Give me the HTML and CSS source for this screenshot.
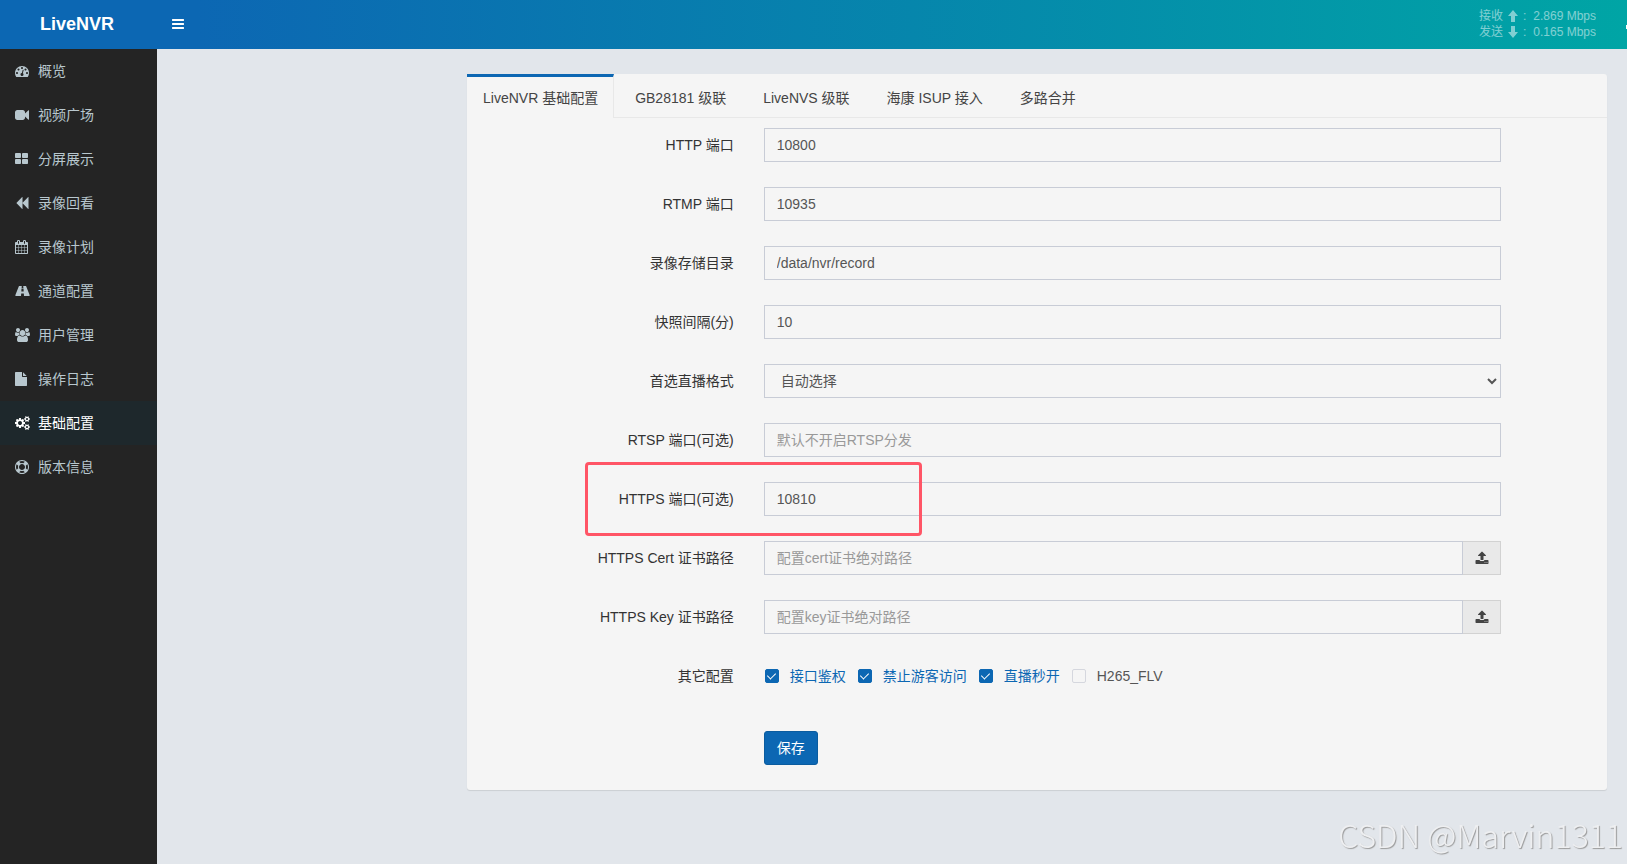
FILE: index.html
```html
<!DOCTYPE html>
<html lang="zh-CN">
<head>
<meta charset="utf-8">
<meta name="viewport" content="width=device-width, initial-scale=1">
<title>LiveNVR</title>
<link rel="stylesheet" href="styles.css">
</head>
<body>
<svg class="sprite" aria-hidden="true">
  <symbol id="i-upload" viewBox="0 0 1792 1792"><path d="M1344 1472q0-26-19-45t-45-19-45 19-19 45 19 45 45 19 45-19 19-45zm256 0q0-26-19-45t-45-19-45 19-19 45 19 45 45 19 45-19 19-45zm128-224v320q0 40-28 68t-68 28h-1472q-40 0-68-28t-28-68v-320q0-40 28-68t68-28h427q21 56 70.500 92t110.500 36h256q61 0 110.500-36t70.500-92h427q40 0 68 28t28 68zm-325-648q-17 40-59 40h-256v448q0 26-19 45t-45 19h-256q-26 0-45-19t-19-45v-448h-256q-42 0-59-40-17-39 14-69l448-448q18-19 45-19t45 19l448 448q31 30 14 69z"/></symbol>
</svg>

<header class="header">
  <a class="logo" href="#">LiveNVR</a>
  <button class="menu-toggle" type="button" aria-label="菜单">
    <svg class="icon" viewBox="0 0 1792 1792"><path d="M1536 1344v128q0 26-19 45t-45 19h-1408q-26 0-45-19t-19-45v-128q0-26 19-45t45-19h1408q26 0 45 19t19 45zm0-512v128q0 26-19 45t-45 19h-1408q-26 0-45-19t-19-45v-128q0-26 19-45t45-19h1408q26 0 45 19t19 45zm0-512v128q0 26-19 45t-45 19h-1408q-26 0-45-19t-19-45v-128q0-26 19-45t45-19h1408q26 0 45 19t19 45z"/></svg>
  </button>
  <div class="traffic">
    <span class="traffic-name">接收</span>
    <svg class="arrow" viewBox="0 0 10 12"><path d="M5 0l5 6H7v6H3V6H0z"/></svg>
    <span class="traffic-colon">:</span>
    <span>2.869 Mbps</span>
    <span class="traffic-name">发送</span>
    <svg class="arrow" viewBox="0 0 10 12"><path d="M5 12l5-6H7V0H3v6H0z"/></svg>
    <span class="traffic-colon">:</span>
    <span>0.165 Mbps</span>
  </div>
  <span class="header-edge"></span>
</header>

<div class="layout">
  <nav class="sidebar">
    <a class="nav-item" href="#"><svg class="icon" viewBox="0 0 1792 1792"><path d="M384 1152q0-53-37.500-90.500t-90.500-37.500-90.500 37.500-37.500 90.500 37.500 90.500 90.500 37.500 90.500-37.500 37.500-90.500zm192-448q0-53-37.500-90.500t-90.500-37.500-90.500 37.500-37.500 90.500 37.500 90.500 90.500 37.500 90.500-37.500 37.500-90.500zm428 481l101-382q6-26-7.500-48.500t-38.500-29.500-48 6.500-30 39.500l-101 382q-60 5-107 43.500t-63 98.500q-20 77 20 146t117 89 146-20 89-117q16-60-6-117t-72-91zm660-33q0-53-37.500-90.500t-90.500-37.500-90.500 37.500-37.500 90.500 37.500 90.500 90.500 37.500 90.500-37.500 37.500-90.500zm-640-640q0-53-37.500-90.500t-90.500-37.500-90.500 37.500-37.500 90.500 37.500 90.500 90.500 37.500 90.500-37.500 37.500-90.500zm448 192q0-53-37.500-90.500t-90.500-37.500-90.500 37.500-37.500 90.500 37.500 90.500 90.500 37.500 90.500-37.500 37.500-90.500zm320 448q0 261-141 483-19 29-54 29h-1402q-35 0-54-29-141-221-141-483 0-182 71-348t191-286 286-191 348-71 348 71 286 191 191 286 71 348z"/></svg>概览</a>
    <a class="nav-item" href="#"><svg class="icon" viewBox="0 0 1792 1792"><path d="M1792 352v1088q0 42-39 59-13 5-25 5-27 0-45-19l-403-403v166q0 119-84.500 203.500t-203.500 84.500h-704q-119 0-203.500-84.500t-84.500-203.500v-704q0-119 84.500-203.500t203.500-84.500h704q119 0 203.500 84.500t84.500 203.500v165l403-402q18-19 45-19 12 0 25 5 39 17 39 59z"/></svg>视频广场</a>
    <a class="nav-item" href="#"><svg class="icon" viewBox="64 0 1792 1792"><path d="M832 1024v384q0 52-38 90t-90 38h-512q-52 0-90-38t-38-90v-384q0-52 38-90t90-38h512q52 0 90 38t38 90zm0-768v384q0 52-38 90t-90 38h-512q-52 0-90-38t-38-90v-384q0-52 38-90t90-38h512q52 0 90 38t38 90zm896 768v384q0 52-38 90t-90 38h-512q-52 0-90-38t-38-90v-384q0-52 38-90t90-38h512q52 0 90 38t38 90zm0-768v384q0 52-38 90t-90 38h-512q-52 0-90-38t-38-90v-384q0-52 38-90t90-38h512q52 0 90 38t38 90z"/></svg>分屏展示</a>
    <a class="nav-item" href="#"><svg class="icon" viewBox="64 0 1792 1792"><path d="M1747 141q19-19 32-13t13 32v1472q0 26-13 32t-32-13l-710-710q-9-9-13-19v710q0 26-13 32t-32-13l-710-710q-19-19-19-45t19-45l710-710q19-19 32-13t13 32v710q4-10 13-19z"/></svg>录像回看</a>
    <a class="nav-item" href="#"><svg class="icon" viewBox="64 0 1792 1792"><path d="M192 1664h288v-288h-288v288zm352 0h320v-288h-320v288zm-352-352h288v-320h-288v320zm352 0h320v-320h-320v320zm-352-384h288v-288h-288v288zm736 736h320v-288h-320v288zm-384-736h320v-288h-320v288zm768 736h288v-288h-288v288zm-384-352h320v-320h-320v320zm-352-864v-288q0-13-9.500-22.500t-22.500-9.500h-64q-13 0-22.500 9.500t-9.500 22.500v288q0 13 9.500 22.500t22.500 9.500h64q13 0 22.500-9.500t9.500-22.500zm736 864h288v-320h-288v320zm-384-384h320v-288h-320v288zm384 0h288v-288h-288v288zm32-480v-288q0-13-9.500-22.500t-22.500-9.500h-64q-13 0-22.500 9.500t-9.500 22.500v288q0 13 9.500 22.500t22.500 9.500h64q13 0 22.500-9.500t9.500-22.500zm384-64v1280q0 52-38 90t-90 38h-1408q-52 0-90-38t-38-90v-1280q0-52 38-90t90-38h128v-96q0-66 47-113t113-47h64q66 0 113 47t47 113v96h384v-96q0-66 47-113t113-47h64q66 0 113 47t47 113v96h128q52 0 90 38t38 90z"/></svg>录像计划</a>
    <a class="nav-item" href="#"><svg class="icon icon-wide" viewBox="0 0 1920 1792"><path d="M1111 932v-4l-24-320q-1-13-11-22.500t-23-9.500h-186q-13 0-23 9.500t-11 22.500l-24 320v4q-1 12 8 20t21 8h244q12 0 21-8t8-20zM1870 1463q0 73-46 73h-704q13 0 22-9.500t8-22.500l-20-256q-1-13-11-22.500t-23-9.500h-272q-13 0-23 9.500t-11 22.500l-20 256q-1 13 8 22.500t22 9.500h-704q-46 0-46-73 0-54 26-116l417-1044q8-19 26-33t38-14h339q-13 0-23 9.500t-11 22.500l-15 192q-1 14 8 23t22 9h166q13 0 22-9t8-23l-15-192q-1-13-11-22.500t-23-9.500h339q20 0 38 14t26 33l417 1044q26 62 26 116z"/></svg>通道配置</a>
    <a class="nav-item" href="#"><svg class="icon icon-wide" viewBox="0 0 1920 1792"><path d="M593 896q-162 5-265 128h-134q-82 0-138-40.500t-56-118.500q0-353 124-353 6 0 43.500 21t97.500 42.500 119 21.500q67 0 133-23-5 37-5 66 0 139 81 256zm1071 637q0 120-73 189.500t-194 69.500h-874q-121 0-194-69.500t-73-189.500q0-53 3.500-103.500t14-109 26.500-108.500 43-97.500 62-81 85.500-53.500 111.500-20q10 0 43 21.500t73 48 107 48 135 21.500 135-21.500 107-48 73-48 43-21.500q61 0 111.500 20t85.500 53.500 62 81 43 97.500 26.500 108.500 14 109 3.500 103.500zm-1024-1277q0 106-75 181t-181 75-181-75-75-181 75-181 181-75 181 75 75 181zm704 384q0 159-112.500 271.500t-271.500 112.500-271.500-112.500-112.500-271.500 112.500-271.500 271.500-112.500 271.500 112.500 112.500 271.500zm576 225q0 78-56 118.500t-138 40.500h-134q-103-123-265-128 81-117 81-256 0-29-5-66 66 23 133 23 59 0 119-21.500t97.500-42.500 43.500-21q124 0 124 353zm-128-609q0 106-75 181t-181 75-181-75-75-181 75-181 181-75 181 75 75 181z"/></svg>用户管理</a>
    <a class="nav-item" href="#"><svg class="icon" viewBox="0 0 1792 1792"><path d="M1024 512v-472q22 14 36 28l408 408q14 14 28 36h-472zm-128 32q0 40 28 68t68 28h544v1056q0 40-28 68t-68 28h-1344q-40 0-68-28t-28-68v-1600q0-40 28-68t68-28h800v544z"/></svg>操作日志</a>
    <a class="nav-item nav-item-active" href="#"><svg class="icon icon-wide" viewBox="0 0 1920 1792"><path d="M896 896q0-106-75-181t-181-75-181 75-75 181 75 181 181 75 181-75 75-181zm768 512q0-52-38-90t-90-38-90 38-38 90q0 53 37.500 90.500t90.500 37.500 90.500-37.500 37.500-90.500zm0-1024q0-52-38-90t-90-38-90 38-38 90q0 53 37.500 90.500t90.500 37.500 90.500-37.500 37.500-90.500zm-384 421v185q0 10-7 19.500t-16 10.500l-155 24q-11 35-32 76 34 48 90 115 7 11 7 20 0 12-7 19-23 30-82.500 89.500t-78.500 59.500q-11 0-21-7l-115-90q-37 19-77 31-11 108-23 155-7 24-30 24h-186q-11 0-20-7.500t-10-17.500l-23-153q-34-10-75-31l-118 89q-7 7-20 7-11 0-21-8-144-133-144-160 0-9 7-19 10-14 41-53t47-61q-23-44-35-82l-152-24q-10-1-17-9.500t-7-19.500v-185q0-10 7-19.500t16-10.500l155-24q11-35 32-76-34-48-90-115-7-11-7-20 0-12 7-20 22-30 82-89t79-59q11 0 21 7l115 90q34-18 77-32 11-108 23-154 7-24 30-24h186q11 0 20 7.500t10 17.500l23 153q34 10 75 31l118-89q8-7 20-7 11 0 21 8 144 133 144 160 0 8-7 19-12 16-42 54t-45 60q23 48 34 82l152 23q10 2 17 10.500t7 19.500zm640 533v140q0 16-149 31-12 27-30 52 51 113 51 138 0 4-4 7-122 71-124 71-8 0-46-47t-52-68q-20 2-30 2t-30-2q-14 21-52 68t-46 47q-2 0-124-71-4-3-4-7 0-25 51-138-18-25-30-52-149-15-149-31v-140q0-16 149-31 13-29 30-52-51-113-51-138 0-4 4-7 4-2 35-20t59-34 30-16q8 0 46 46.500t52 67.500q20-2 30-2t30 2q51-71 92-112l6-2q4 0 124 70 4 3 4 7 0 25-51 138 17 23 30 52 149 15 149 31zm0-1024v140q0 16-149 31-12 27-30 52 51 113 51 138 0 4-4 7-122 71-124 71-8 0-46-47t-52-68q-20 2-30 2t-30-2q-14 21-52 68t-46 47q-2 0-124-71-4-3-4-7 0-25 51-138-18-25-30-52-149-15-149-31v-140q0-16 149-31 13-29 30-52-51-113-51-138 0-4 4-7 4-2 35-20t59-34 30-16q8 0 46 46.500t52 67.500q20-2 30-2t30 2q51-71 92-112l6-2q4 0 124 70 4 3 4 7 0 25-51 138 17 23 30 52 149 15 149 31z"/></svg>基础配置</a>
    <a class="nav-item" href="#"><svg class="icon" viewBox="0 0 1792 1792"><path d="M896 0q182 0 348 71t286 191 191 286 71 348-71 348-191 286-286 191-348 71-348-71-286-191-191-286-71-348 71-348 191-286 286-191 348-71zm0 128q-190 0-361 90l194 194q82-28 167-28t167 28l194-194q-171-90-361-90zm-678 1129l194-194q-28-82-28-167t28-167l-194-194q-90 171-90 361t90 361zm678 407q190 0 361-90l-194-194q-82 28-167 28t-167-28l-194 194q171 90 361 90zm0-384q159 0 271.500-112.500t112.500-271.500-112.500-271.500-271.500-112.500-271.500 112.500-112.500 271.500 112.500 271.500 271.500 112.500zm484-217l194 194q90-171 90-361t-90-361l-194 194q28 82 28 167t-28 167z"/></svg>版本信息</a>
  </nav>

  <main class="content">
    <section class="card">
      <nav class="tabs">
        <a class="tab tab-active" href="#">LiveNVR 基础配置</a>
        <a class="tab" href="#">GB28181 级联</a>
        <a class="tab" href="#">LiveNVS 级联</a>
        <a class="tab" href="#">海康 ISUP 接入</a>
        <a class="tab" href="#">多路合并</a>
      </nav>
      <form class="form">
        <div class="row">
          <label class="label" for="http">HTTP 端口</label>
          <div class="field"><input class="control" id="http" type="text" value="10800"></div>
        </div>
        <div class="row">
          <label class="label" for="rtmp">RTMP 端口</label>
          <div class="field"><input class="control" id="rtmp" type="text" value="10935"></div>
        </div>
        <div class="row">
          <label class="label" for="dir">录像存储目录</label>
          <div class="field"><input class="control" id="dir" type="text" value="/data/nvr/record"></div>
        </div>
        <div class="row">
          <label class="label" for="snap">快照间隔(分)</label>
          <div class="field"><input class="control" id="snap" type="text" value="10"></div>
        </div>
        <div class="row">
          <label class="label" for="format">首选直播格式</label>
          <div class="field"><select class="control" id="format"><option>自动选择</option></select></div>
        </div>
        <div class="row">
          <label class="label" for="rtsp">RTSP 端口(可选)</label>
          <div class="field"><input class="control" id="rtsp" type="text" placeholder="默认不开启RTSP分发"></div>
        </div>
        <div class="row row-marked">
          <label class="label" for="https">HTTPS 端口(可选)</label>
          <div class="field"><input class="control" id="https" type="text" value="10810"></div>
        </div>
        <div class="row">
          <label class="label" for="cert">HTTPS Cert 证书路径</label>
          <div class="field">
            <input class="control" id="cert" type="text" placeholder="配置cert证书绝对路径">
            <button class="upload" type="button" aria-label="上传 cert"><svg class="icon" viewBox="0 0 1792 1792"><use href="#i-upload"/></svg></button>
          </div>
        </div>
        <div class="row">
          <label class="label" for="key">HTTPS Key 证书路径</label>
          <div class="field">
            <input class="control" id="key" type="text" placeholder="配置key证书绝对路径">
            <button class="upload" type="button" aria-label="上传 key"><svg class="icon" viewBox="0 0 1792 1792"><use href="#i-upload"/></svg></button>
          </div>
        </div>
        <div class="row row-options">
          <span class="label">其它配置</span>
          <div class="field options">
            <label class="option"><input class="check" type="checkbox" checked><span class="option-text">接口鉴权</span></label>
            <label class="option"><input class="check" type="checkbox" checked><span class="option-text">禁止游客访问</span></label>
            <label class="option"><input class="check" type="checkbox" checked><span class="option-text">直播秒开</span></label>
            <label class="option"><input class="check" type="checkbox"><span class="option-text">H265_FLV</span></label>
          </div>
        </div>
        <div class="row">
          <span class="label"></span>
          <div class="field"><button class="save" type="submit">保存</button></div>
        </div>
      </form>
    </section>
  </main>
</div>
<div class="watermark">CSDN @Marvin1311</div>
</body>
</html>
```
FILE: styles.css
```css
*, *::before, *::after { box-sizing: border-box; }

body {
  margin: 0;
  min-height: 100vh;
  display: flex;
  flex-direction: column;
  background: #e2e6eb;
  color: #333;
  font: 14px/20px "Liberation Sans", "Noto Sans CJK SC", sans-serif;
  overflow-x: hidden;
}

a { color: inherit; text-decoration: none; }
button, input, select { font: inherit; color: inherit; margin: 0; }

.sprite { position: absolute; width: 0; height: 0; }
.icon { width: 14px; height: 14px; flex: none; fill: currentColor; }
.icon-wide { width: 15px; }

.header {
  position: relative;
  display: flex;
  align-items: center;
  height: 49px;
  padding: 0 31px 2px 0;
  color: #fff;
  background: linear-gradient(to right, #0c67b3 198px, #00a5a5);
}
.logo {
  width: 157px;
  padding-right: 3px;
  text-align: center;
  font-size: 18px;
  font-weight: bold;
}
.menu-toggle {
  display: flex;
  padding: 15px;
  border: 0;
  background: none;
}
.traffic {
  margin-left: auto;
  display: grid;
  grid-template-columns: auto 10px auto auto;
  column-gap: 5px;
  align-items: center;
  font-size: 12px;
  line-height: 16px;
  opacity: 0.5;
}
.traffic-colon { margin-right: 2px; }
.arrow { width: 10px; height: 12px; fill: currentColor; }
.header-edge {
  position: absolute;
  top: 25px;
  right: 0;
  width: 1px;
  height: 4px;
  background: #fff;
}

.layout { display: flex; flex: 1; }
.sidebar {
  flex: none;
  width: 157px;
  background: #242424;
  color: #b8c7ce;
}
.nav-item {
  display: flex;
  align-items: center;
  padding: 12px 15px;
}
.nav-item .icon { margin-right: 9px; }
.nav-item .icon-wide { margin-right: 8px; }
.nav-item-active { background: #1e282c; color: #fff; }

.content {
  flex: 1;
  min-width: 0;
  padding: 25px 20px 25px 310px;
}
.card {
  background: #f5f5f5;
  border-radius: 3px;
  box-shadow: 0 1px 1px rgba(0, 0, 0, 0.1);
}

.tabs {
  display: flex;
  gap: 5px;
  border-bottom: 1px solid #e8e8e8;
}
.tab {
  padding: 11px 15px 9px 16px;
  border: solid transparent;
  border-width: 3px 1px 0 0;
  color: #444;
}
.tab-active {
  border-top-color: #0c67b3;
  border-right-color: #e8e8e8;
  background: #f5f5f5;
  margin-bottom: -1px;
}

.form {
  display: flex;
  flex-direction: column;
  gap: 25px;
  padding: 10px 0 25px;
  margin: 0 -5px 0 -6px;
}
.row { display: flex; position: relative; }
.label {
  width: 25%;
  flex: none;
  padding: 7px 15px 7px 0;
  text-align: right;
}
.field {
  width: 66.66%;
  display: flex;
  padding: 0 15px;
}
.control {
  flex: 1;
  min-width: 0;
  height: 34px;
  padding: 6px 12px;
  border: 1px solid #c8ccd6;
  border-radius: 0;
  background: #f5f5f5;
  color: #555;
}
.control::placeholder { color: #999; opacity: 1; }
.upload {
  display: flex;
  align-items: center;
  justify-content: center;
  width: 38px;
  padding: 0;
  border: 1px solid #d2d2d2;
  border-left: 0;
  background: #e9e9e9;
  color: #444;
}

/* Highlight frame drawn over the HTTPS port row */
.row-marked::after {
  content: "";
  position: absolute;
  top: -20px;
  left: calc(25% - 164px);
  width: 337px;
  height: 74px;
  border: 3px solid #ff5566;
  border-radius: 4px;
  pointer-events: none;
}

.row-options { margin-bottom: 13px; }
.options { align-items: center; gap: 12px; padding-left: 16px; }
.option { display: flex; align-items: center; gap: 11px; }
.check {
  appearance: none;
  width: 14px;
  height: 14px;
  border: 1px solid #d5d7de;
  border-radius: 2px;
}
.check:checked {
  border-color: #0c67b3;
  background: #0c67b3;
  display: grid;
}
.check:checked::after {
  content: "";
  width: 5px;
  height: 8px;
  place-self: center;
  border: solid #fff;
  border-width: 0 1px 1px 0;
  transform: translateY(-1px) rotate(45deg);
}
.option-text { color: #555; }
.check:checked + .option-text { color: #0c67b3; }

.save {
  height: 34px;
  padding: 0 12px;
  border: 1px solid #0b5c9f;
  border-radius: 3px;
  background: #0c67b3;
  color: #fff;
}

.watermark {
  position: fixed;
  right: 4px;
  bottom: 8px;
  font: 300 32px/44px "Noto Sans CJK SC", sans-serif;
  color: #eeeff1;
  text-shadow: 1px 1px 1px #999;
}
```
